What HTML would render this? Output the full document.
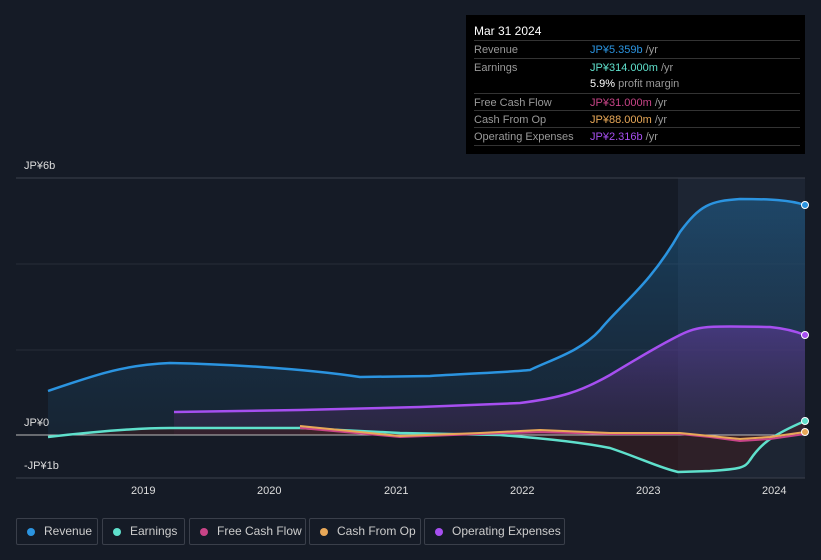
<!DOCTYPE html>
<html><head><style>
body{margin:0;width:821px;height:560px;background:#151b26;font-family:"Liberation Sans",sans-serif;overflow:hidden;position:relative}
.tip{position:absolute;left:466px;top:15px;width:339px;height:139px;background:#000;color:#fff;font-size:11px}
.tip .h{position:absolute;left:8px;top:9px;font-size:12px}
.row{position:absolute;left:8px;width:326px;border-top:1px solid #333;height:17px;line-height:18px;color:#999}
.row span{position:absolute;left:116px}
.lg{position:absolute;top:518px;height:27px;border:1px solid #3a3f4a;border-radius:2px;color:#ccc;font-size:12px;line-height:24px;box-sizing:border-box}
.lg i{position:absolute;left:10px;top:9px;width:8px;height:8px;border-radius:50%}
.lg b{font-weight:normal;position:absolute;left:27px}
.ax{position:absolute;color:#ddd;font-size:11px}
</style></head><body>
<svg width="821" height="560" style="position:absolute;left:0;top:0">
<defs>
<linearGradient id="rg" x1="0" y1="0" x2="0" y2="1"><stop offset="0" stop-color="#1e6fa8" stop-opacity=".45"/><stop offset="1" stop-color="#1e4a6a" stop-opacity=".2"/></linearGradient>
<linearGradient id="og" x1="0" y1="0" x2="0" y2="1"><stop offset="0" stop-color="#6a3aa8" stop-opacity=".5"/><stop offset="1" stop-color="#5a2a60" stop-opacity=".25"/></linearGradient>
</defs>
<rect x="678" y="178" width="127" height="300" fill="#1d2533"/>
<line x1="16" y1="178" x2="805" y2="178" stroke="#3a404c"/>
<line x1="16" y1="264" x2="805" y2="264" stroke="#262c38"/>
<line x1="16" y1="350" x2="805" y2="350" stroke="#262c38"/>
<line x1="16" y1="478" x2="805" y2="478" stroke="#3a404c"/>
<path d="M48,391 C90,377 120,365 170,363 C220,364 300,368 360,377 L430,376 C480,373 510,372 530,370 C550,360 580,352 600,330 C620,305 650,285 680,232 C700,205 710,201 740,199 C770,199 790,200 805,205 L805,435 L48,435Z" fill="url(#rg)"/>
<path d="M174,412 L300,410 L420,407 L520,403 C560,398 580,392 610,375 C640,357 660,345 680,335 C700,325 710,326 770,327 C790,329 800,333 805,335 L805,435 L174,435Z" fill="url(#og)"/>
<path d="M300,426 L400,436 L480,433 L540,430 L610,433 L680,433 L710,436 L740,439 L770,437 L805,432 L805,435 L300,435Z" fill="#5a2a2a" opacity=".5"/>
<path d="M48,437 C100,431 140,428 170,428 L300,428 L400,433 L500,435 C540,438 580,442 610,448 C640,458 660,468 678,472 L710,471 C740,469 745,468 750,460 C760,445 770,436 805,421 L805,435 L48,435Z" fill="#3a1e22" opacity=".6"/>
<line x1="16" y1="435" x2="805" y2="435" stroke="#bbb" stroke-width="1"/>
<path d="M48,391 C90,377 120,365 170,363 C220,364 300,368 360,377 L430,376 C480,373 510,372 530,370 C550,360 580,352 600,330 C620,305 650,285 680,232 C700,205 710,201 740,199 C770,199 790,200 805,205" fill="none" stroke="#2b94e0" stroke-width="2.5"/>
<path d="M174,412 L300,410 L420,407 L520,403 C560,398 580,392 610,375 C640,357 660,345 680,335 C700,325 710,326 770,327 C790,329 800,333 805,335" fill="none" stroke="#a64ff0" stroke-width="2.5"/>
<path d="M48,437 C100,431 140,428 170,428 L300,428 L400,433 L500,435 C540,438 580,442 610,448 C640,458 660,468 678,472 L710,471 C740,469 745,468 750,460 C760,445 770,436 805,421" fill="none" stroke="#5fe0cc" stroke-width="2.5"/>
<path d="M300,428 L400,437 L480,434 L540,432 L610,434 L680,434 L710,437 L740,441 L770,439 L805,434" fill="none" stroke="#c84487" stroke-width="2"/>
<path d="M300,426 L400,436 L480,433 L540,430 L610,433 L680,433 L710,436 L740,439 L770,437 L805,432" fill="none" stroke="#e8a858" stroke-width="2"/>
<circle cx="805" cy="205" r="3.5" fill="#2b94e0" stroke="#fff"/>
<circle cx="805" cy="335" r="3.5" fill="#a64ff0" stroke="#fff"/>
<circle cx="805" cy="421" r="3.5" fill="#5fe0cc" stroke="#fff"/>
<circle cx="805" cy="432" r="3.5" fill="#e8a858" stroke="#fff"/>
</svg>
<div class="ax" style="left:24px;top:160px">JP¥6b</div>
<div class="ax" style="left:24px;top:417px">JP¥0</div>
<div class="ax" style="left:24px;top:460px">-JP¥1b</div>
<div class="ax" style="left:131px;top:485px">2019</div>
<div class="ax" style="left:257px;top:485px">2020</div>
<div class="ax" style="left:384px;top:485px">2021</div>
<div class="ax" style="left:510px;top:485px">2022</div>
<div class="ax" style="left:636px;top:485px">2023</div>
<div class="ax" style="left:762px;top:485px">2024</div>
<div class="tip"><div class="h">Mar 31 2024</div>
<div class="row" style="top:25px">Revenue<span><em style="font-style:normal;color:#2b94e0">JP¥5.359b</em> /yr</span></div>
<div class="row" style="top:43px">Earnings<span><em style="font-style:normal;color:#5fe0cc">JP¥314.000m</em> /yr</span></div>
<div class="row" style="top:60px;border-top:none"><span><em style="font-style:normal;color:#fff">5.9%</em> profit margin</span></div>
<div class="row" style="top:78px">Free Cash Flow<span><em style="font-style:normal;color:#c84487">JP¥31.000m</em> /yr</span></div>
<div class="row" style="top:95px">Cash From Op<span><em style="font-style:normal;color:#e8a858">JP¥88.000m</em> /yr</span></div>
<div class="row" style="top:112px">Operating Expenses<span><em style="font-style:normal;color:#a64ff0">JP¥2.316b</em> /yr</span></div>
<div class="row" style="top:130px;height:0"></div>
</div>
<div class="lg" style="left:16px;width:82px"><i style="background:#2b94e0"></i><b>Revenue</b></div>
<div class="lg" style="left:102px;width:83px"><i style="background:#5fe0cc"></i><b>Earnings</b></div>
<div class="lg" style="left:189px;width:117px"><i style="background:#c84487"></i><b>Free Cash Flow</b></div>
<div class="lg" style="left:309px;width:112px"><i style="background:#e8a858"></i><b>Cash From Op</b></div>
<div class="lg" style="left:424px;width:141px"><i style="background:#a64ff0"></i><b>Operating Expenses</b></div>
</body></html>
